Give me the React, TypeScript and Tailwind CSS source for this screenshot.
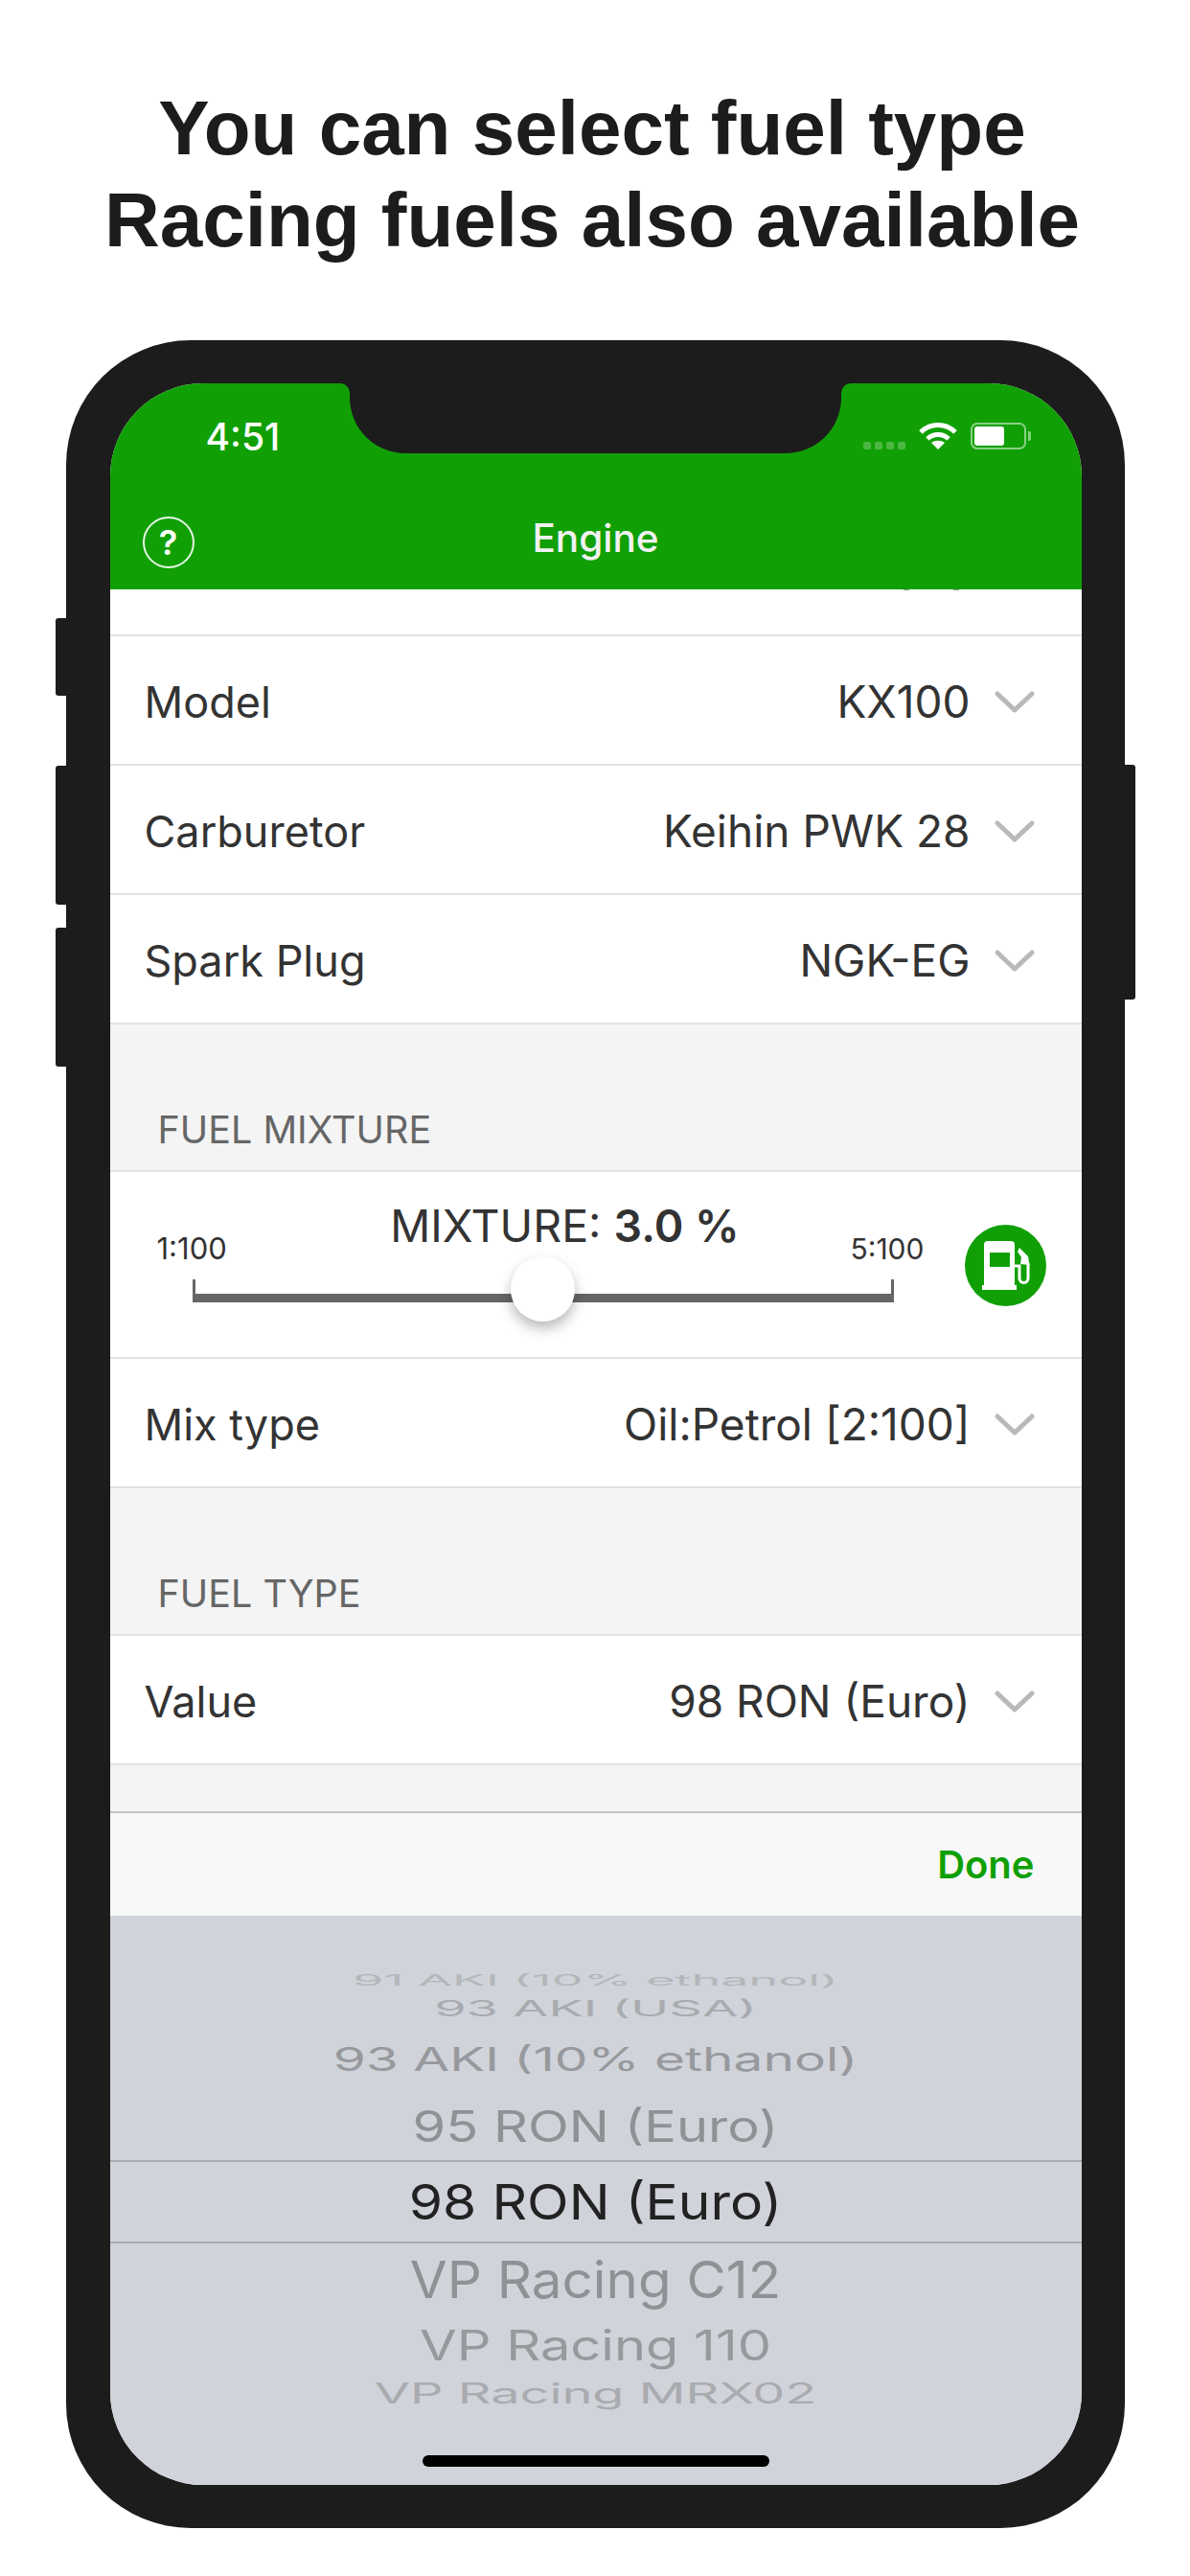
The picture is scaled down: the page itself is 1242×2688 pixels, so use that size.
const green = "#10a005";

const topRows = [
  { label: "Model", value: "KX100" },
  { label: "Carburetor", value: "Keihin PWK 28" },
  { label: "Spark Plug", value: "NGK-EG" },
];

function Chevron() {
  return (
    <svg width="44" height="26" viewBox="0 0 44 26" className="ml-[24px]" fill="none">
      <path d="M4 4 L22 21 L40 4" stroke="#b9b9b9" strokeWidth="5" strokeLinecap="round" strokeLinejoin="round" />
    </svg>
  );
}

function Row({ label, value }: { label: string; value: string }) {
  return (
    <div className="flex h-[135px] shrink-0 items-center border-b-2 border-[#e2e2e2] bg-white pl-[36px] pr-[48px] pt-[4px] text-[45px] text-[#333333]">
      <span>{label}</span>
      <span className="ml-auto text-[46px]">{value}</span>
      <Chevron />
    </div>
  );
}

function SectionHeader({ title }: { title: string }) {
  return (
    <div className="flex h-[154px] shrink-0 items-end border-b-2 border-[#e2e2e2] bg-[#f4f4f4] pb-[12px] pl-[50px] text-[39.5px] text-[#666666]">
      {title}
    </div>
  );
}

function FuelIcon() {
  return (
    <svg width="85" height="85" viewBox="0 0 85 85">
      <circle cx="42.5" cy="42.5" r="42.5" fill={green} />
      <path
        fillRule="evenodd"
        fill="#fff"
        d="M20 21 a4 4 0 0 1 4-4 h24 a4 4 0 0 1 4 4 v42 h2 v5 h-36 v-5 h2 Z M26 29 h21 v15 h-21 Z"
      />
      <path d="M66 40 V56 a4.5 4.5 0 0 1-9 0 V43 H52" fill="none" stroke="#fff" strokeWidth="3" />
      <path d="M57 24 L66 33 L67.5 42 L58 41 L59 34 L55 28 Z" fill="#fff" />
    </svg>
  );
}

function Mixture() {
  return (
    <div className="relative h-[195px] shrink-0 border-b-2 border-[#e2e2e2] bg-white">
      <div className="pt-[26px] pr-[64px] text-center text-[46.5px] leading-[60px] text-[#333333]">
        MIXTURE: <span className="font-semibold">3.0 %</span>
      </div>
      <div className="absolute left-[49px] top-[63px] text-[31px] leading-[34px] text-[#333333]">1:100</div>
      <div className="absolute left-[773px] top-[63px] text-[30px] leading-[34px] text-[#333333]">5:100</div>
      <div className="absolute left-[86px] top-[112px] h-[24px] w-[732px] border-x-[3px] border-b-[9px] border-[#666666]" />
      <div className="absolute left-[418px] top-[88px] h-[68px] w-[67px] rounded-full bg-white shadow-[0_7px_14px_rgba(0,0,0,0.28)]" />
      <div className="absolute left-[892px] top-[55px]">
        <FuelIcon />
      </div>
    </div>
  );
}

function Wifi() {
  return (
    <svg width="40" height="28" viewBox="0 0 40 28" fill="none" stroke="#fff" strokeWidth="5">
      <path d="M2 10 C12 0 28 0 38 10" />
      <path d="M9 17 C15 11 25 11 31 17" />
      <path d="M20 28 L13 21 C17 18 23 18 27 21 Z" fill="#fff" stroke="none" />
    </svg>
  );
}

const pickerAbove = [
  { text: "91 AKI (10% ethanol)", box: "h-[24px]", cls: "text-[52px] scale-y-[0.3] text-[#b4b6ba]" },
  { text: "93 AKI (USA)", box: "h-[34px]", cls: "text-[54px] scale-y-[0.42] text-[#a9abb0]" },
  { text: "93 AKI (10% ethanol)", box: "h-[70px]", cls: "text-[55px] scale-y-[0.62] text-[#97999d]" },
  { text: "95 RON (Euro)", box: "h-[71px]", cls: "text-[56px] scale-y-[0.8] text-[#8f9195]" },
];

const pickerBelow = [
  { text: "VP Racing C12", box: "h-[76px]", cls: "text-[56.5px] scale-y-[0.95] text-[#8f9195]" },
  { text: "VP Racing 110", box: "h-[60px]", cls: "text-[56px] scale-y-[0.78] text-[#97999d]" },
  { text: "VP Racing MRX02", box: "h-[42px]", cls: "text-[54px] scale-y-[0.54] text-[#a9abb0]" },
];

function PickerItem({ text, box, cls }: { text: string; box: string; cls: string }) {
  return (
    <div className={`flex items-center justify-center ${box}`}>
      <span className={`inline-block whitespace-nowrap ${cls}`}>{text}</span>
    </div>
  );
}

function Picker() {
  return (
    <div className="flex flex-1 flex-col items-stretch bg-[#d0d3da] pt-[56px] text-center leading-none">
      {pickerAbove.map((p) => (
        <PickerItem key={p.text} {...p} />
      ))}
      <div className="flex h-[87px] shrink-0 items-center justify-center border-y-2 border-[#a9abb1]">
        <span className="inline-block scale-y-[0.9] text-[57px] text-[#222222]">98 RON (Euro)</span>
      </div>
      {pickerBelow.map((p) => (
        <PickerItem key={p.text} {...p} />
      ))}
      <div className="mx-auto mt-[43px] h-[12px] w-[362px] rounded-full bg-black" />
    </div>
  );
}

export default function App() {
  return (
    <div className="relative flex h-[2688px] w-[1242px] flex-col items-center overflow-hidden bg-white font-['Inter','Liberation_Sans',sans-serif]">
      <h1 className="pt-[86px] pr-[6px] text-center font-['Liberation_Sans',sans-serif] text-[80px] leading-[96px] font-bold text-[#1c1c1c]">
        You can select fuel type
        <br />
        Racing fuels also available
      </h1>

      <div className="relative mt-[77px] h-[2283px] w-[1105px] rounded-[130px] bg-[#1c1c1c] py-[45px] pl-[46px] pr-[45px]">
        {/* side buttons */}
        <div className="absolute left-[-11px] top-[290px] h-[81px] w-[14px] rounded-l-[3px] bg-[#1c1c1c]" />
        <div className="absolute left-[-11px] top-[444px] h-[145px] w-[14px] rounded-l-[3px] bg-[#1c1c1c]" />
        <div className="absolute left-[-11px] top-[613px] h-[145px] w-[14px] rounded-l-[3px] bg-[#1c1c1c]" />
        <div className="absolute right-[-11px] top-[443px] h-[245px] w-[14px] rounded-r-[3px] bg-[#1c1c1c]" />

        <div className="relative flex h-full flex-col overflow-hidden rounded-[97px] bg-[#f4f4f4]">
          {/* notch */}
          <div className="absolute left-[250px] top-0 z-10 h-[73px] w-[513px] rounded-b-[58px] bg-[#1c1c1c]" />
          <svg width="10" height="10" viewBox="0 0 10 10" className="absolute left-[240px] top-0 z-10">
            <path d="M10 0 H0 A10 10 0 0 1 10 10 Z" fill="#1c1c1c" />
          </svg>
          <svg width="10" height="10" viewBox="0 0 10 10" className="absolute left-[763px] top-0 z-10">
            <path d="M0 0 H10 A10 10 0 0 0 0 10 Z" fill="#1c1c1c" />
          </svg>

          {/* status + nav */}
          <div className="relative h-[215px] shrink-0 bg-[#10a005] text-white">
            <div className="absolute left-[100px] top-[33px] text-[39px] leading-[46px] font-medium">4:51</div>
            <div className="absolute right-[53px] top-[41px] flex items-start">
              <div className="mr-[14px] mt-[20px] flex gap-[4px]">
                <span className="size-[8px] rounded-[2px] bg-white/25" />
                <span className="size-[8px] rounded-[2px] bg-white/25" />
                <span className="size-[8px] rounded-[2px] bg-white/25" />
                <span className="size-[8px] rounded-[2px] bg-white/25" />
              </div>
              <Wifi />
              <div className="ml-[14px] flex h-[28px] w-[58px] items-center rounded-[7px] border-2 border-white/50 p-[2px]">
                <div className="h-full w-[31px] rounded-[3px] bg-white" />
              </div>
              <div className="ml-[2px] mt-[9px] h-[10px] w-[3px] rounded-r-[2px] bg-white/50" />
            </div>
            <div className="absolute left-[34px] top-[139px] flex size-[54px] items-center justify-center rounded-full border-[2.5px] border-white/90 text-[36px] font-semibold">
              ?
            </div>
            <div className="pt-[137px] text-center text-[40.5px] leading-[50px] font-medium text-[#f2f2f2]">Engine</div>
          </div>

          {/* bottom of the row scrolled under the nav bar */}
          <div className="relative h-[49px] shrink-0 border-b-2 border-[#e2e2e2] bg-white">
            <span className="absolute left-[828px] top-0 h-[1px] w-[6px] bg-[#999999]" />
            <span className="absolute left-[880px] top-0 h-[1px] w-[6px] bg-[#999999]" />
          </div>
          {topRows.map((r) => (
            <Row key={r.label} {...r} />
          ))}

          <SectionHeader title="FUEL MIXTURE" />
          <Mixture />
          <Row label="Mix type" value="Oil:Petrol [2:100]" />

          <SectionHeader title="FUEL TYPE" />
          <Row label="Value" value="98 RON (Euro)" />

          <div className="h-[48px] shrink-0" />
          <div className="flex h-[109px] shrink-0 items-center justify-end border-t-2 border-[#c4c4c4] bg-[#f8f8f8] pr-[49px] text-[40px] font-semibold text-[#10a005]">
            Done
          </div>
          <Picker />
        </div>
      </div>
    </div>
  );
}
